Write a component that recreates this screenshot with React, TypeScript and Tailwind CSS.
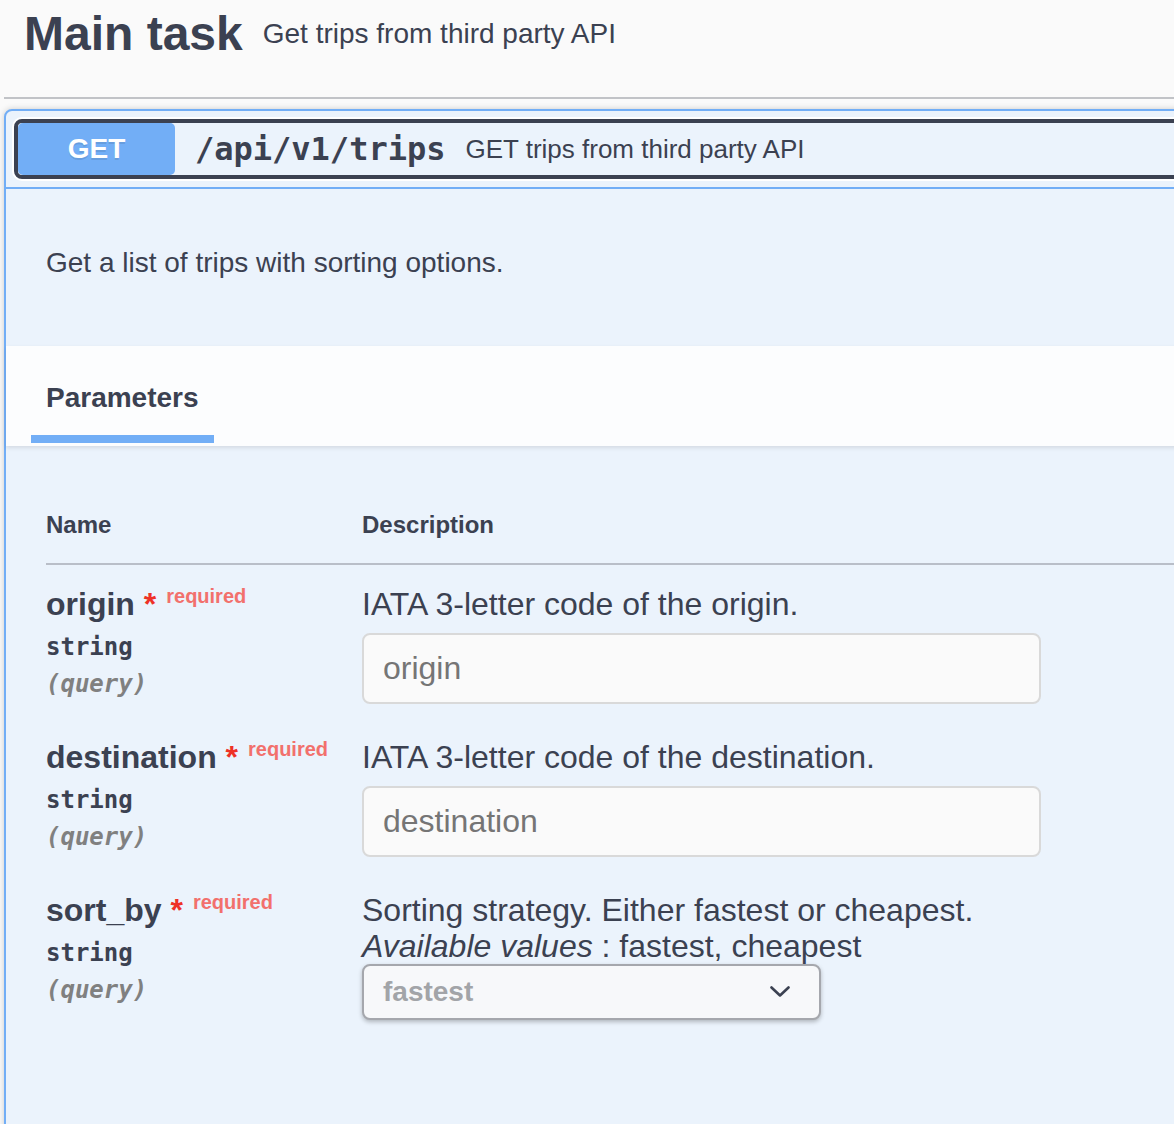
import React from "react";

const sans = "font-['Liberation_Sans',Arial,Helvetica,sans-serif]";
const mono = "font-['DejaVu_Sans_Mono','Liberation_Mono',monospace]";

type Param = {
  name: string;
  description: string;
  enumValues?: string;
  placeholder?: string;
  selected?: string;
};

const params: Param[] = [
  { name: "origin", description: "IATA 3-letter code of the origin.", placeholder: "origin" },
  {
    name: "destination",
    description: "IATA 3-letter code of the destination.",
    placeholder: "destination",
  },
  {
    name: "sort_by",
    description: "Sorting strategy. Either fastest or cheapest.",
    enumValues: "fastest, cheapest",
    selected: "fastest",
  },
];

const Chevron: React.FC = () => (
  <svg width="20" height="12" viewBox="0 0 20 12" fill="none">
    <polyline
      points="1.5,1.5 10,9.5 18.5,1.5"
      stroke="#3b4151"
      strokeWidth="2.6"
      strokeLinecap="round"
      strokeLinejoin="round"
    />
  </svg>
);

const ParamRow: React.FC<{ param: Param }> = ({ param }) => (
  <div className="grid grid-cols-[316px_1fr] pt-[21px]">
    <div>
      <div className="text-[32px] leading-[36px] font-bold whitespace-nowrap">
        {param.name}
        <span className="text-[#ee3126]">{"\u00a0*"}</span>
        <span className="relative top-[-12px] pl-[10px] text-[20px] font-bold text-[#f2706c]">
          required
        </span>
      </div>
      <div className={`${mono} pt-[7px] pb-[9px] text-[24px] leading-[28px] font-bold`}>
        string
      </div>
      <div className={`${mono} text-[24px] leading-[28px] font-bold italic text-[#808080]`}>
        (query)
      </div>
    </div>

    <div>
      <div className="text-[32px] leading-[36px]">{param.description}</div>
      {param.enumValues && (
        <div className="text-[32px] leading-[36px]">
          <i>Available values</i> : {param.enumValues}
        </div>
      )}

      {param.placeholder ? (
        <input
          type="text"
          readOnly
          placeholder={param.placeholder}
          className={`${sans} mt-[11px] mb-[14px] block h-[71px] w-[679px] rounded-[8px] border-2 border-[#d9d9d9] bg-[#fafafa] px-[19px] text-[32px] outline-none placeholder:text-[#757575]`}
        />
      ) : (
        <div className="mt-0 mb-[14px] flex h-[56px] w-[459px] items-center justify-between rounded-[8px] border-2 border-[#a5a7ad] bg-[#f7f8fa] pl-[19px] pr-[29px] shadow-[0_2px_4px_rgba(0,0,0,0.25)]">
          <span className="text-[28px] font-bold text-[#a2a4a8]">{param.selected}</span>
          <Chevron />
        </div>
      )}
    </div>
  </div>
);

const App: React.FC = () => {
  return (
    <div className={`${sans} h-[1124px] w-[1174px] overflow-hidden bg-[#fafafa] text-[#3b4151]`}>
      <div className="ml-[4px] w-[1260px]">
        <h3 className="flex items-center border-b-2 border-[#c1c3c7] pl-[20px] pt-[10px] pb-[39px]">
          <span className="text-[48px] leading-[48px] font-bold">Main task</span>
          <small className="pl-[20px] text-[28px] leading-[28px]">Get trips from third party API</small>
        </h3>

        <div className="mt-[10px] rounded-t-[8px] border-2 border-[#72aef6] bg-[#ebf3fc] shadow-[0_0_6px_rgba(0,0,0,0.19)]">
          <div className="border-b-2 border-[#72aef6] pt-[8px] pb-[8px] pl-[8px] pr-[20px]">
            <div className="flex h-[60px] items-center rounded-[8px] border-4 border-[#3b4151] shadow-[0_0_0_2px_#ffffff]">
              <span className="flex h-[52px] w-[157px] items-center justify-center rounded-[5px] bg-[#72aef6] text-[28px] font-bold text-white [text-shadow:0_2px_0_rgba(0,0,0,0.1)]">
                GET
              </span>
              <span className={`${mono} px-[20px] text-[32px] font-bold`}>/api/v1/trips</span>
              <span className="text-[26px]">GET trips from third party API</span>
            </div>
          </div>

          <div className="pt-[58px] pb-[67px] pl-[40px] text-[28px] leading-[32px]">
            Get a list of trips with sorting options.
          </div>

          <div className="relative h-[100px] bg-[#fcfdfe] pl-[40px] pt-[36px] shadow-[0_2px_4px_rgba(0,0,0,0.1)]">
            <div className="inline-flex flex-col items-center">
              <span className="text-[28px] leading-[32px] font-bold">Parameters</span>
              <span className="mt-[21px] block h-[8px] w-[120%] shrink-0 bg-[#72aef6]" />
            </div>
          </div>

          <div className="px-[40px] pt-[41px] pb-[200px]">
            <div className="grid grid-cols-[316px_1fr] border-b-2 border-[#b9bec8] py-[24px] text-[24px] leading-[28px] font-bold">
              <div>Name</div>
              <div>Description</div>
            </div>
            {params.map((p) => (
              <ParamRow key={p.name} param={p} />
            ))}
          </div>
        </div>
      </div>
    </div>
  );
};

export default App;
